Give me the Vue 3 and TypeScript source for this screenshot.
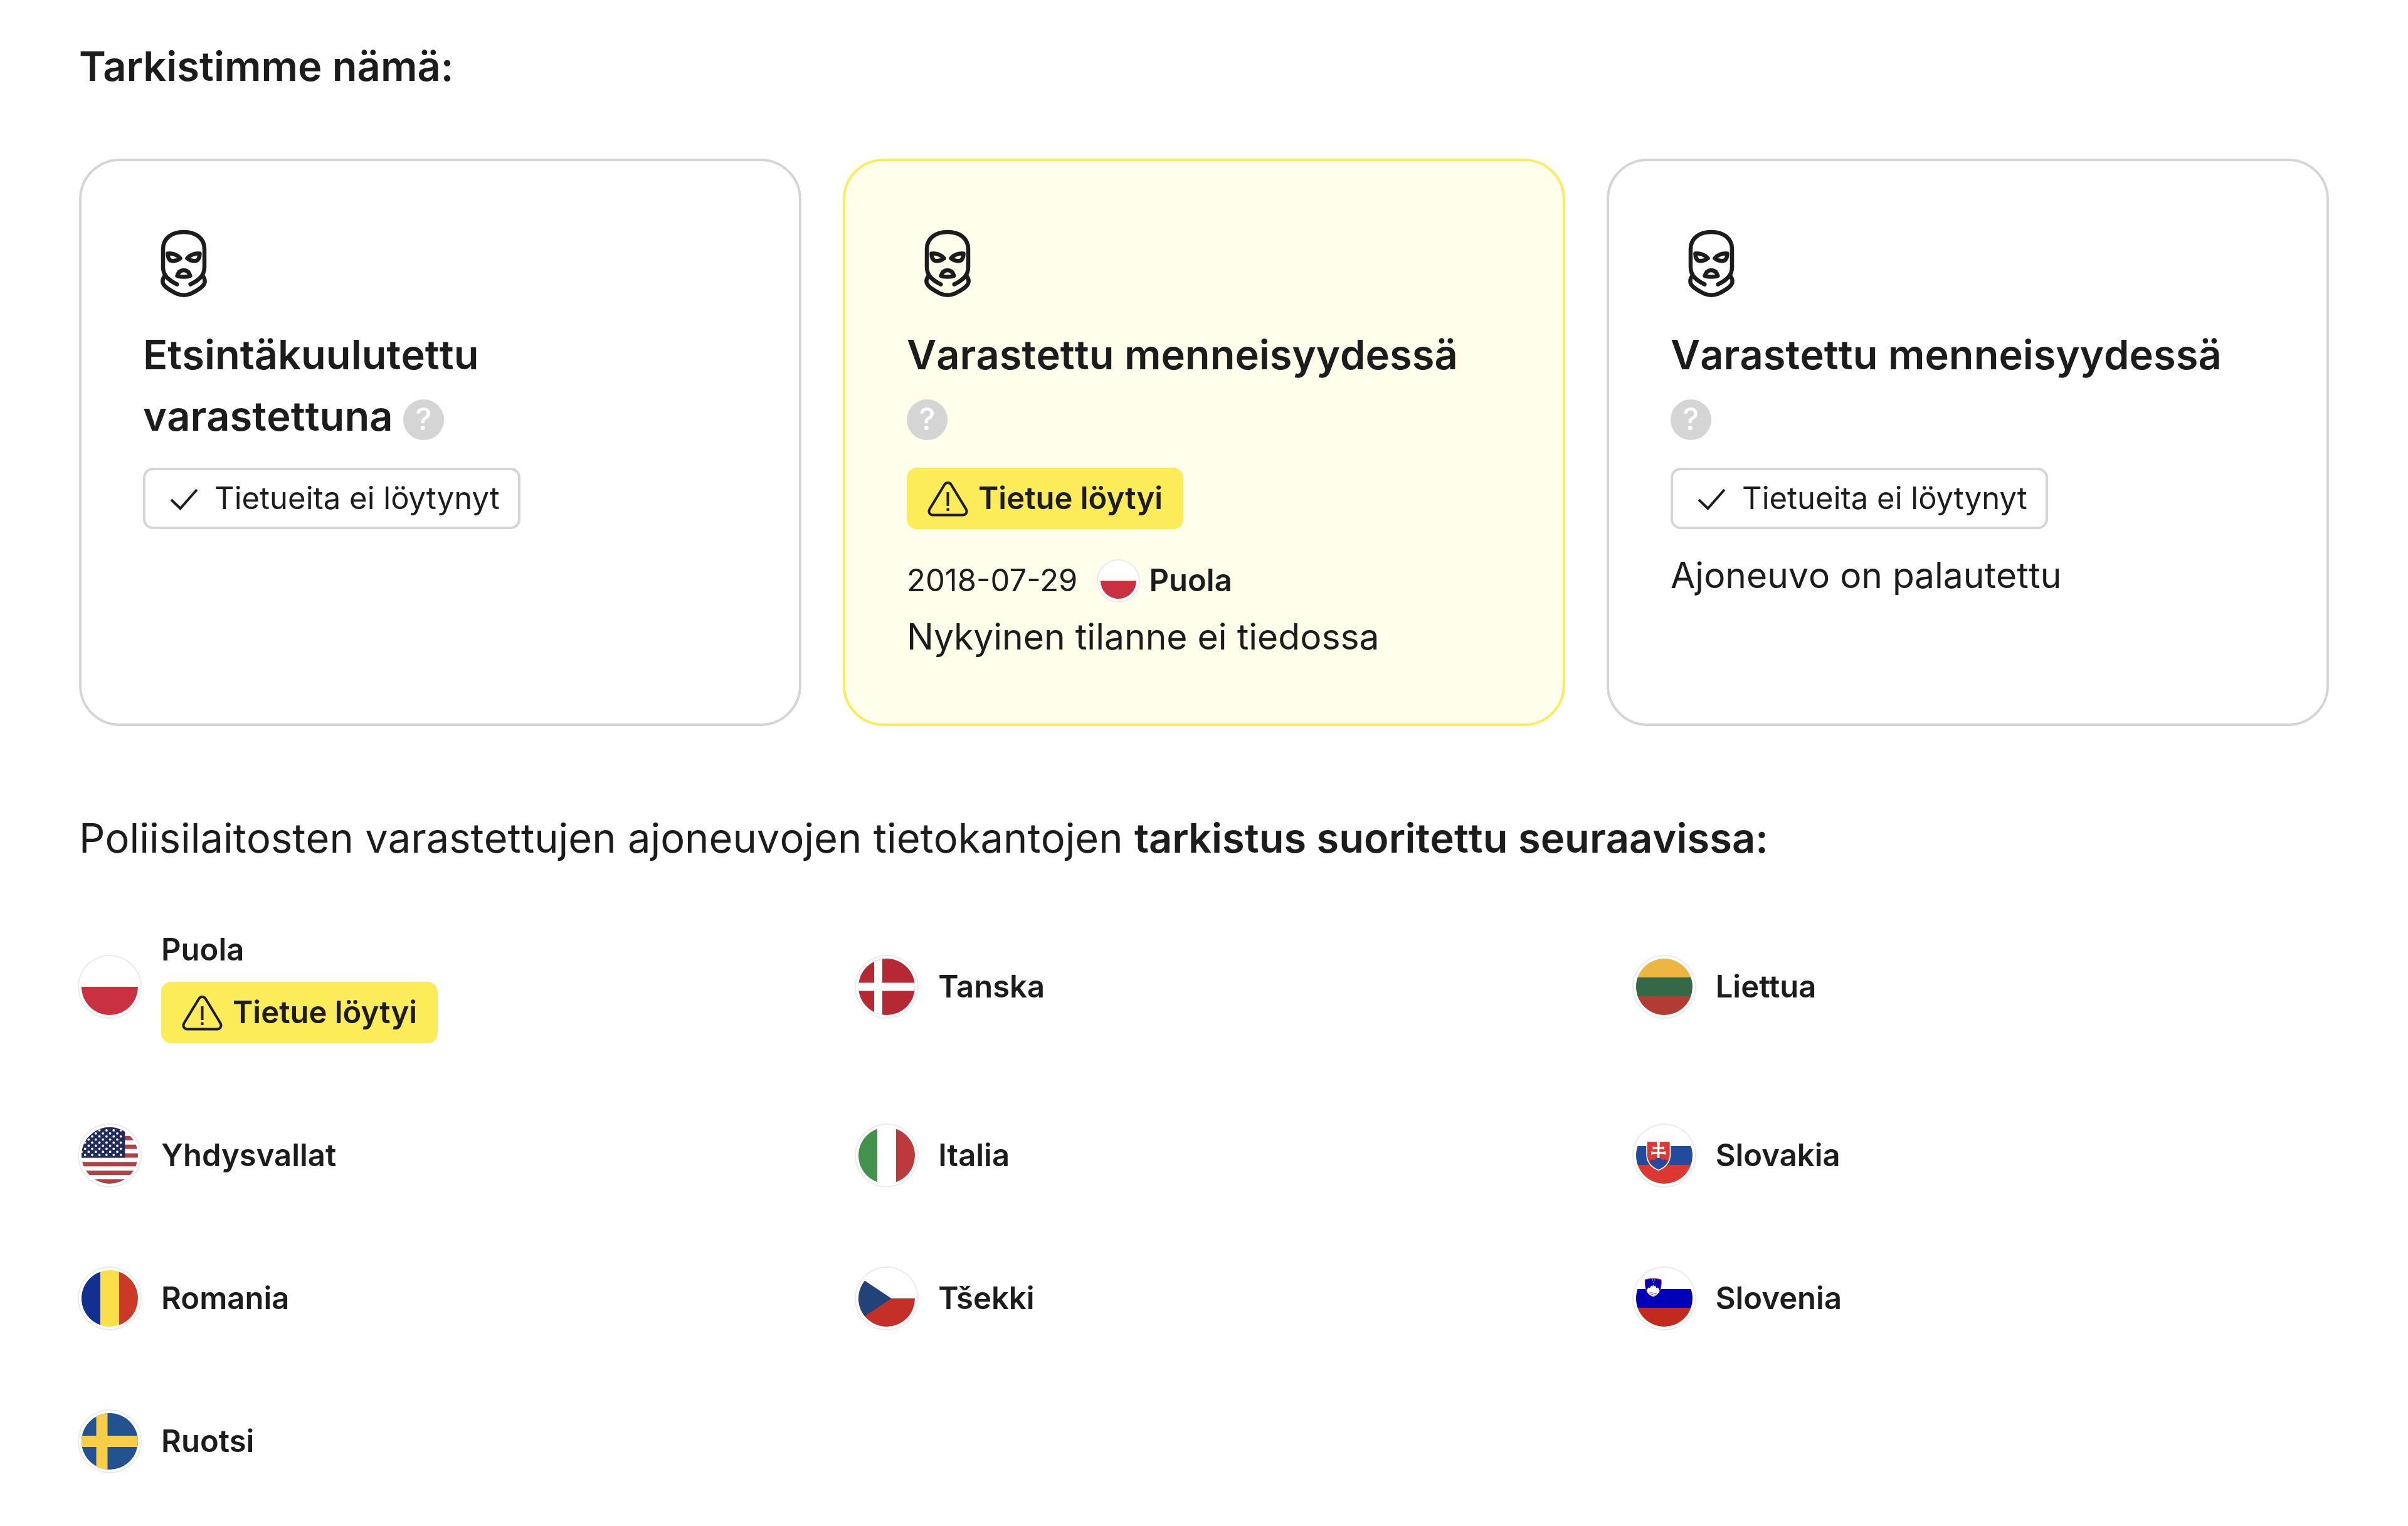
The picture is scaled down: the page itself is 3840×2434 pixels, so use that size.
<script setup lang="ts">
interface Shape {
  tag: 'rect' | 'path' | 'circle'
  attrs: Record<string, string | number>
}

interface Country {
  name: string
  flag: Shape[]
  found?: boolean
}

interface Check {
  title: string
  found: boolean
  date?: string
  country?: Country
  note?: string
}

const rect = (x: number, y: number, width: number, height: number, fill: string): Shape => ({
  tag: 'rect',
  attrs: { x, y, width, height, fill },
})

const path = (d: string, fill: string, extra: Record<string, string | number> = {}): Shape => ({
  tag: 'path',
  attrs: { d, fill, ...extra },
})

const stars: Shape[] = []
for (let row = 0; row < 9; row++) {
  const offset = row % 2 === 0 ? 5.7 : 0
  for (let col = 0; col < 6; col++) {
    stars.push({
      tag: 'circle',
      attrs: { cx: offset + col * 11.4, cy: 4.9 * (row + 1), r: 1.9, fill: '#fff' },
    })
  }
}

const usa: Shape[] = [0, 2, 4, 6, 8, 10, 12].map((i) => rect(0, (i * 90) / 13, 90, 90 / 13, '#ae4144'))
usa.push(rect(0, 0, 69.3, 48.5, '#1f2c5c'), ...stars)

const poland: Country = { name: 'Puola', flag: [rect(0, 45, 90, 45, '#c93040')], found: true }

const countries: Country[] = [
  poland,
  {
    name: 'Tanska',
    flag: [rect(0, 0, 90, 90, '#b62932'), rect(25, 0, 13, 90, '#fff'), rect(0, 38.5, 90, 13, '#fff')],
  },
  {
    name: 'Liettua',
    flag: [rect(0, 0, 90, 30, '#edb643'), rect(0, 30, 90, 30, '#356846'), rect(0, 60, 90, 30, '#b43a34')],
  },
  { name: 'Yhdysvallat', flag: usa },
  { name: 'Italia', flag: [rect(0, 0, 30, 90, '#42924e'), rect(60, 0, 30, 90, '#bc3a3c')] },
  {
    name: 'Slovakia',
    flag: [
      rect(0, 30, 90, 30, '#224c9b'),
      rect(0, 60, 90, 30, '#db3832'),
      path('M17 22.500H54.500V43C54.500 57 47 64 35.700 68.500C24.500 64 17 57 17 43Z', '#db3832', {
        stroke: '#fff',
        'stroke-width': 1.6,
      }),
      path(
        'M21.500 54C24 51 27 51 29.500 53C31 49.500 34 48.500 35.700 48.500C38 48.500 41 49.500 42.500 53C45 51 48 51 50.500 54C47.500 60.500 42.500 64.500 35.700 67.500C29 64.500 24 60.500 21.500 54Z',
        '#224c9b',
      ),
      path(
        'M33.300 23.500Q35.700 25 38.100 23.500L37.400 31.700Q42 31.700 45 30.500V35.500Q42 34.400 37.400 34.400V39.500Q43 39.500 47.300 38.300V43.700Q43 42.500 37.400 42.500V49H34V42.500Q28.500 42.500 24.200 43.700V38.300Q28.500 39.500 34 39.500V34.400Q29.500 34.400 26.500 35.500V30.500Q29.500 31.700 34 31.700Z',
        '#fff',
      ),
    ],
  },
  {
    name: 'Romania',
    flag: [rect(0, 0, 30, 90, '#12308f'), rect(30, 0, 30, 90, '#fadf4b'), rect(60, 0, 30, 90, '#cc3a27')],
  },
  {
    name: 'Tšekki',
    flag: [rect(0, 45, 90, 45, '#c42f28'), path('M-15 0L52.500 45L-15 90Z', '#22437a')],
  },
  {
    name: 'Slovenia',
    flag: [
      rect(0, 30, 90, 30, '#0000b8'),
      rect(0, 60, 90, 30, '#c22a1d'),
      path('M14.500 15Q27.300 11.500 40 15Q41 26 37.500 34Q34 40 27.300 42.500Q20.500 40 17 34Q13.500 26 14.500 15Z', '#0000b8', {
        stroke: '#c22a3d',
        'stroke-width': 1,
      }),
      path('M17 32L19.500 27.500L22 28.500L24 24.500L26 26L27.300 23L28.800 26L30.600 24.500L32.600 28.500L35 27.500L37.500 32C36.500 37 33 40 27.300 42C21.500 40 18 37 17 32Z', '#fff'),
      path('M21 36.500Q24 35 27.300 36.500T33.500 36.500M23.500 39.300Q25.500 38 27.300 39.300T31 39.300', 'none', {
        stroke: '#0000b8',
        'stroke-width': 0.8,
      }),
      path('M25 14.500H27V16.500H25ZM28.500 14.500H30.500V16.500H28.500ZM26.800 18.500H28.800V20.500H26.800Z', '#a99a4a'),
    ],
  },
  {
    name: 'Ruotsi',
    flag: [rect(0, 0, 90, 90, '#22528f'), rect(23.5, 0, 18, 90, '#f7ce46'), rect(0, 36, 90, 18, '#f7ce46')],
  },
]

const checks: Check[] = [
  { title: 'Etsintäkuulutettu varastettuna', found: false },
  {
    title: 'Varastettu menneisyydessä',
    found: true,
    date: '2018-07-29',
    country: poland,
    note: 'Nykyinen tilanne ei tiedossa',
  },
  { title: 'Varastettu menneisyydessä', found: false, note: 'Ajoneuvo on palautettu' },
]
</script>

<template>
  <main class="report">
    <svg class="sprite" aria-hidden="true">
      <symbol id="icon-warning" viewBox="0 0 65 65">
        <path
          d="M27.500 9.500C29.500 6 35.500 6 37.500 9.500L61.500 49C64 53.500 61.500 58.500 56.500 58.500H8.500C3.500 58.500 1 53.500 3.500 49Z"
          fill="none" stroke="currentColor" stroke-width="4"
        />
        <path d="M32.500 22V44M32.500 47.500V52" fill="none" stroke="currentColor" stroke-width="4" />
      </symbol>
      <symbol id="icon-check" viewBox="0 0 65 65">
        <path d="M12 34L26.500 48L53 18" fill="none" stroke="currentColor" stroke-width="4" />
      </symbol>
      <symbol id="icon-mask" viewBox="0 0 131 131">
        <g fill="none" stroke="currentColor" stroke-width="6.500" stroke-linecap="round" stroke-linejoin="round">
          <path d="M54.300 98.500C40 91.500 32 84 32 71V42C32 25 46 15 65 15S98 25 98 42V71C98 84 90 91.500 75.700 98.500" />
          <path d="M34.500 85C31 90 30.500 95 33 99C38 106 47 110 54 113.500C61.500 116.500 68.500 116.500 76 113.500C83 110 92 106 97 99C99.500 95 99 90 95.500 85" />
          <path d="M39.500 49.500C47 48.500 55 51.500 59.500 57C55 60.500 49 62 44 60.500C40.500 58 39.500 54 39.500 49.500Z" />
          <path d="M90.500 49.500C83 48.500 75 51.500 70.500 57C75 60.500 81 62 86 60.500C89.500 58 90.500 54 90.500 49.500Z" />
          <path d="M54.500 85C56.500 79 60 76 65 76S73.500 79 75.500 85C72 87 58 87 54.500 85Z" />
        </g>
      </symbol>
    </svg>

    <section>
      <h2 class="heading">Tarkistimme nämä:</h2>
      <div class="cards">
        <article v-for="(check, i) in checks" :key="i" class="card" :class="{ 'card-found': check.found }">
          <svg class="card-icon" aria-hidden="true"><use href="#icon-mask" /></svg>
          <h3 class="card-title">
            {{ check.title }} <button class="help" type="button">?</button>
          </h3>
          <span v-if="check.found" class="badge badge-found">
            <svg class="badge-icon" aria-hidden="true"><use href="#icon-warning" /></svg>
            Tietue löytyi
          </span>
          <span v-else class="badge">
            <svg class="badge-icon" aria-hidden="true"><use href="#icon-check" /></svg>
            Tietueita ei löytynyt
          </span>
          <div v-if="check.note" class="details">
            <div v-if="check.country" class="record">
              <time :datetime="check.date">{{ check.date }}</time>
              <span class="origin">
                <svg class="flag flag-small" viewBox="0 0 90 90" aria-hidden="true">
                  <component :is="s.tag" v-for="(s, j) in check.country.flag" :key="j" v-bind="s.attrs" />
                </svg>
                {{ check.country.name }}
              </span>
            </div>
            <p class="note">{{ check.note }}</p>
          </div>
        </article>
      </div>
    </section>

    <section class="databases">
      <h2 class="heading heading-light">
        Poliisilaitosten varastettujen ajoneuvojen tietokantojen
        <strong>tarkistus suoritettu seuraavissa:</strong>
      </h2>
      <ul class="countries">
        <li v-for="country in countries" :key="country.name" class="country">
          <svg class="flag" viewBox="0 0 90 90" aria-hidden="true">
            <component :is="s.tag" v-for="(s, j) in country.flag" :key="j" v-bind="s.attrs" />
          </svg>
          <div class="country-text">
            <span class="country-name">{{ country.name }}</span>
            <span v-if="country.found" class="badge badge-found">
              <svg class="badge-icon" aria-hidden="true"><use href="#icon-warning" /></svg>
              Tietue löytyi
            </span>
          </div>
        </li>
      </ul>
    </section>
  </main>
</template>

<style>
body {
  margin: 0;
  background: #fff;
}
</style>

<style scoped>
.report {
  padding: 57px 126px 82px;
  color: #1c1c1c;
  font-family: Inter, 'Liberation Sans', sans-serif;
  font-size: 49px;
  line-height: 62px;
}

.sprite {
  position: absolute;
  width: 0;
  height: 0;
}

.heading,
.card-title {
  margin: 0;
  font-size: 65px;
  font-weight: 600;
  line-height: 98px;
}

/* Keeps the double t of the Finnish words from closing up. */
.card-title,
.note,
.heading-light {
  font-kerning: none;
}

.heading-light {
  font-weight: 400;
}

.heading-light strong {
  font-weight: 600;
}

.cards {
  display: grid;
  grid-template-columns: repeat(3, minmax(0, 1fr));
  gap: 66px;
  margin-top: 98px;
}

.card {
  display: flex;
  flex-direction: column;
  align-items: flex-start;
  padding: 98px;
  border: 4px solid #d5d5d5;
  border-radius: 65px;
}

.card-found {
  background: #ffffec;
  border-color: #fdec59;
}

.card-icon {
  width: 131px;
  height: 131px;
}

.card-title {
  margin: 31px 0 33px;
}

.help {
  width: 65px;
  height: 65px;
  padding: 0;
  border: 0;
  border-radius: 50%;
  background: #d5d5d5;
  color: #fff;
  font: 500 49px/62px Inter, 'Liberation Sans', sans-serif;
  text-align: center;
  vertical-align: middle;
}

.badge {
  box-sizing: border-box;
  display: inline-flex;
  align-items: center;
  gap: 16px;
  height: 98px;
  padding: 0 29px;
  border: 4px solid #d5d5d5;
  border-radius: 16px;
  white-space: nowrap;
}

.badge-found {
  background: #fdec59;
  border-color: #fdec59;
  font-weight: 600;
}

.badge-icon {
  width: 65px;
  height: 65px;
}

.details {
  margin-top: 33px;
}

.record {
  display: flex;
  align-items: center;
  gap: 33px;
  height: 98px;
}

.origin {
  display: flex;
  align-items: center;
  gap: 16px;
  font-weight: 600;
}

.note {
  margin: 0;
  font-size: 57px;
  line-height: 81px;
}

.flag {
  box-sizing: border-box;
  flex: none;
  width: 98px;
  height: 98px;
  padding: 4px;
  border-radius: 50%;
  background: #fff;
  box-shadow: 0 0 0 2px #ebebeb;
  overflow: hidden;
}

.flag-small {
  width: 65px;
  height: 65px;
}

.databases {
  margin-top: 130px;
}

.countries {
  display: grid;
  grid-template-columns: repeat(3, minmax(0, 1fr));
  gap: 130px;
  margin: 98px 0 0;
  padding: 0;
  list-style: none;
}

.country {
  display: flex;
  align-items: center;
  gap: 33px;
}

.country-text {
  display: flex;
  flex-direction: column;
  align-items: flex-start;
  gap: 20px;
}

.country-name {
  font-weight: 600;
}
</style>
